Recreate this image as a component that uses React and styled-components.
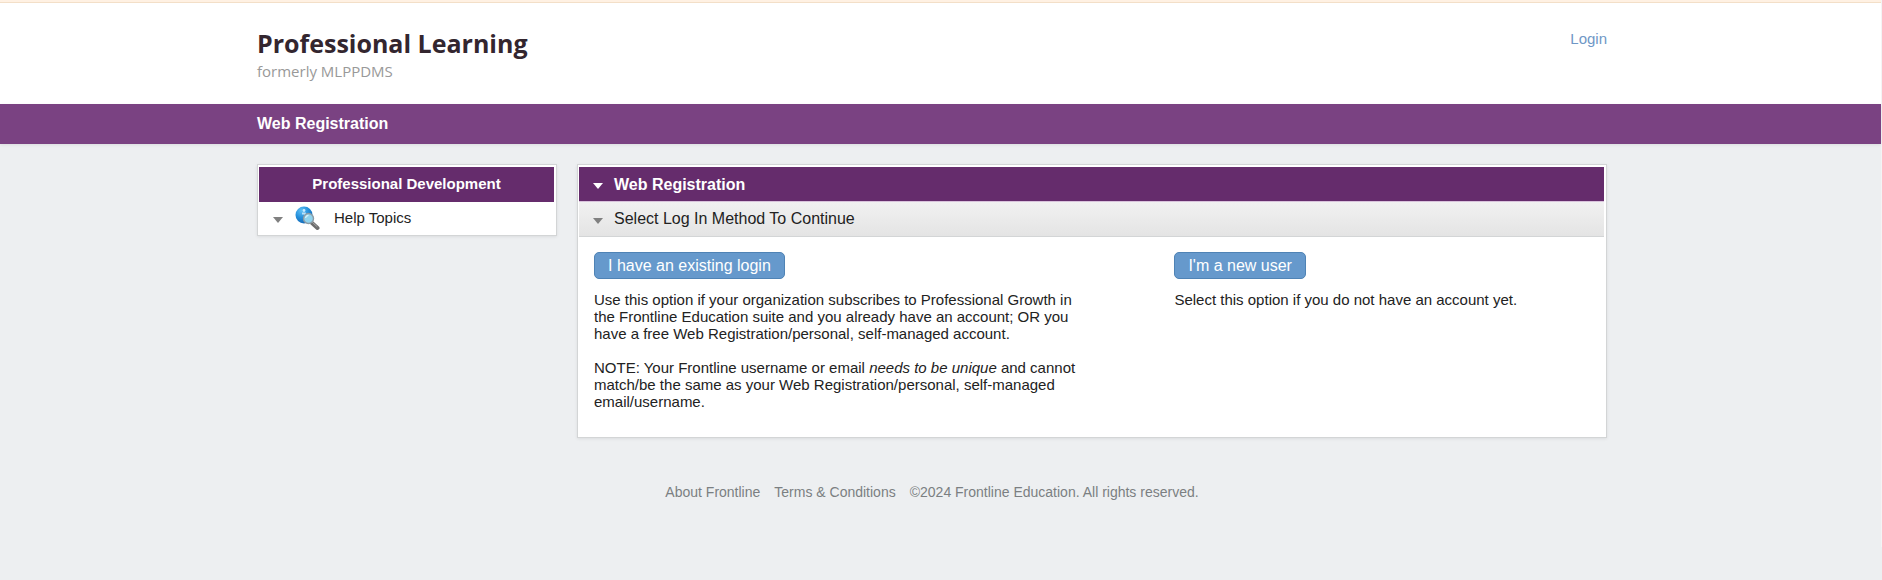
import styled, { createGlobalStyle, css } from 'styled-components'

const GlobalStyle = createGlobalStyle`
    * {
        box-sizing: border-box;
    }

    html {
        min-height: 100%;
        background-color: #edeff1;
    }

    body {
        margin: 0;
        color: #222;
        font-family: "Liberation Sans", Arial, sans-serif;
        font-size: 15px;
        line-height: 17px;
    }

    h1, h2, p {
        margin: 0;
    }

    a {
        color: inherit;
        text-decoration: none;
    }
`

const Page = styled.div`
    border-right: 1px solid #f4f4f5;
`

const Container = styled.div`
    max-width: 1350px;
    width: 100%;
    margin: 0 auto;
`

const Notice = styled.div`
    height: 3px;
    background-color: #fff1e3;
    border-bottom: 1px solid #f3dfc8;
`

const Header = styled.header`
    height: 101px;
    background-color: #fff;
    padding: 20px 17px 0 0;

    ${Container} {
        display: flex;
        justify-content: space-between;
        align-items: flex-start;
    }
`

const Brand = styled.div`
    font-family: "Open Sans", sans-serif;
`

const BrandTitle = styled.h1`
    color: #33262f;
    font-size: 25px;
    font-weight: 700;
    line-height: 40px;
`

const BrandNote = styled.p`
    color: #999;
    font-size: 15px;
    font-weight: 400;
    line-height: 16px;
`

const LoginLink = styled.a`
    color: #6f97c6;
    padding-top: 6px;
    line-height: 20px;
`

const TitleBar = styled.div`
    background-color: #7a4282;
    box-shadow: 0 1px 3px rgba(0, 0, 0, 0.08);
    padding-right: 17px;
`

const PageTitle = styled.h1`
    color: #fff;
    font-size: 16px;
    line-height: 40px;
`

const Main = styled.main`
    padding: 20px 17px 0 0;

    ${Container} {
        display: flex;
        align-items: flex-start;
        gap: 20px;
    }
`

const Panel = styled.section`
    background-color: #fff;
    border: 1px solid #d3d5d6;
    box-shadow: 0 1px 3px rgba(0, 0, 0, 0.08);
    padding: 2px 2px 0 1px;

    ${props => props.$side ? css`
        flex: 0 0 300px;
    ` : css`
        flex: 1;
        min-width: 0;
    `}
`

const SideTitle = styled.h2`
    background-color: #652c6c;
    color: #fff;
    font-size: 15px;
    line-height: 33px;
    padding-bottom: 2px;
    text-align: center;
`

const ToggleRow = styled.button`
    display: flex;
    align-items: center;
    width: 100%;
    height: 33px;
    margin: 0;
    padding: 0 14px 2px;
    border: 0;
    background: none;
    color: #222;
    font: inherit;
    text-align: left;
    cursor: pointer;

    ${props => props.$kind === 'title' && css`
        height: 35px;
        padding-bottom: 0;
        background-color: #652c6c;
        border-bottom: 1px solid #d9c3dc;
        color: #fff;
        font-size: 16px;
        font-weight: 700;
    `}

    ${props => props.$kind === 'sub' && css`
        height: 35px;
        padding-bottom: 1px;
        background-image: linear-gradient(#f1f1f1, #e4e4e4);
        border-bottom: 1px solid #d3d5d6;
        font-size: 16px;
    `}
`

const Arrow = styled.span`
    flex: none;
    width: 0;
    height: 0;
    margin: 4px 11px 0 0;
    border: 5px solid transparent;
    border-top: 6px solid ${props => props.$light ? '#fff' : '#808080'};
    border-bottom: 0;
`

const HelpSvg = styled.svg`
    flex: none;
    margin: 0 14px 0 1px;
`

const Options = styled.div`
    display: grid;
    grid-template-columns: 7fr 5fr;
    padding: 15px 15px 27px;
`

const Option = styled.div`
    p {
        max-width: 490px;
        margin-top: 12px;
    }

    p + p {
        margin-top: 17px;
    }
`

const BlueButton = styled.button`
    height: 27px;
    padding: 1px 13px 0;
    border: 1px solid #4f83b5;
    border-radius: 5px;
    background-color: #6699cc;
    color: #fff;
    font-family: inherit;
    font-size: 16px;
    line-height: 24px;
    cursor: pointer;
`

const Footer = styled.footer`
    display: flex;
    justify-content: center;
    gap: 14px;
    padding: 46px 17px 46px 0;
    color: #7b7f82;
    font-size: 14px;
`

const HelpIcon = () => (
    <HelpSvg width="25" height="26" viewBox="0 0 25 26" aria-hidden="true">
        <defs>
            <radialGradient id="globe" cx="0.35" cy="0.25" r="0.8">
                <stop offset="0" stopColor="#5fc0f5" />
                <stop offset="0.5" stopColor="#2590dc" />
                <stop offset="1" stopColor="#1266b4" />
            </radialGradient>
        </defs>
        <circle cx="9" cy="10" r="8.5" fill="url(#globe)" />
        <circle cx="9" cy="5.5" r="1.4" fill="#c9ecff" />
        <path d="M7 8.5h3v6" fill="none" stroke="#b6e2fb" strokeWidth="1.8" />
        <path d="M17 18l5.5 5" stroke="#6d6d6d" strokeWidth="4" strokeLinecap="round" />
        <path d="M17.5 17.5l4.5 4" stroke="#a5a5a5" strokeWidth="1" strokeLinecap="round" />
        <circle cx="13.5" cy="13.5" r="5" fill="#8fd3ee" stroke="#8b9ba5" strokeWidth="1.4" />
        <path d="M10.5 13a3.3 3.3 0 0 1 3-2.7" fill="none" stroke="#d5f3fc" strokeWidth="1.2" />
    </HelpSvg>
)

const App = () => {
    return (
        <>
            <GlobalStyle />
            <Page>
                <Notice />
                <Header>
                    <Container>
                        <Brand>
                            <BrandTitle>Professional Learning</BrandTitle>
                            <BrandNote>formerly MLPPDMS</BrandNote>
                        </Brand>
                        <LoginLink href="#">Login</LoginLink>
                    </Container>
                </Header>
                <TitleBar>
                    <Container>
                        <PageTitle>Web Registration</PageTitle>
                    </Container>
                </TitleBar>
                <Main>
                    <Container>
                        <Panel $side>
                            <SideTitle>Professional Development</SideTitle>
                            <ToggleRow type="button">
                                <Arrow />
                                <HelpIcon />
                                Help Topics
                            </ToggleRow>
                        </Panel>
                        <Panel>
                            <ToggleRow type="button" $kind="title">
                                <Arrow $light />
                                Web Registration
                            </ToggleRow>
                            <ToggleRow type="button" $kind="sub">
                                <Arrow />
                                Select Log In Method To Continue
                            </ToggleRow>
                            <Options>
                                <Option>
                                    <BlueButton type="button">I have an existing login</BlueButton>
                                    <p>
                                        Use this option if your organization subscribes to Professional Growth in
                                        the Frontline Education suite and you already have an account; OR you
                                        have a free Web Registration/personal, self-managed account.
                                    </p>
                                    <p>
                                        NOTE: Your Frontline username or email <em>needs to be unique</em> and cannot
                                        match/be the same as your Web Registration/personal, self-managed
                                        email/username.
                                    </p>
                                </Option>
                                <Option>
                                    <BlueButton type="button">I'm a new user</BlueButton>
                                    <p>Select this option if you do not have an account yet.</p>
                                </Option>
                            </Options>
                        </Panel>
                    </Container>
                </Main>
                <Footer>
                    <a href="#">About Frontline</a>
                    <a href="#">Terms &amp; Conditions</a>
                    <span>©2024 Frontline Education. All rights reserved.</span>
                </Footer>
            </Page>
        </>
    )
}

export default App
